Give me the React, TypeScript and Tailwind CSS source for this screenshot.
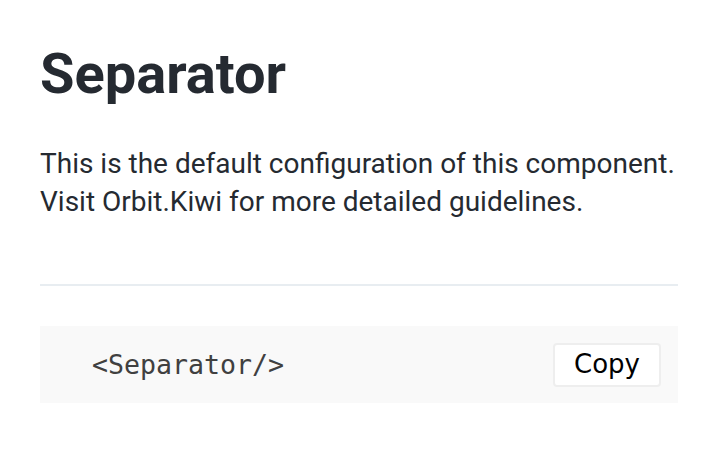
import React from 'react';

const App: React.FC = () => {
  return (
    <div className="min-h-screen bg-white px-10 pt-[38px] font-['Roboto',sans-serif]">
      <h1 className="text-[56px] leading-[72px] font-bold text-[#252a31]">Separator</h1>
      <p className="mt-[35px] text-[28px] leading-[38px] text-[#252a31]">
        This is the default configuration of this component.
        <br />
        Visit Orbit.Kiwi for more detailed guidelines.
      </p>
      <hr className="mt-[63px] border-0 border-t-2 border-[#e8edf1]" />
      <div className="mt-[40px] flex h-[77px] items-center justify-between bg-[#f9f9f9] pl-[52px] pr-[17px]">
        <code className="font-['DejaVu_Sans_Mono',monospace] text-[26.6px] text-[#404040]">&lt;Separator/&gt;</code>
        <button className="h-[44px] w-[108px] rounded-[4px] border-2 border-[#eeeeee] bg-white font-['DejaVu_Sans',sans-serif] text-[26px] text-black">
          Copy
        </button>
      </div>
    </div>
  );
};

export default App;
